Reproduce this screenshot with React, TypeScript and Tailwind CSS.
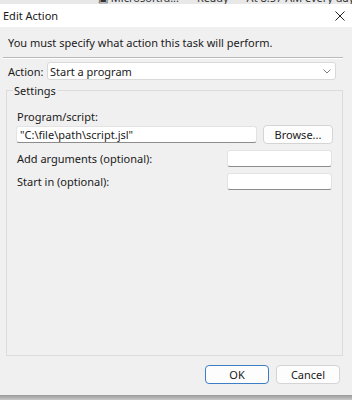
import React from "react";

const font = { fontFamily: '"Noto Sans", "Open Sans", sans-serif' };

const TextBox = ({ value, className }: { value?: string; className: string }) => (
  <div
    className={
      "bg-white border border-[#e3e3e3] border-b-[#8c8c8c] rounded-[3px] text-[11px] leading-[15px] px-[3px] text-[#1a1a1a] " +
      className
    }
  >
    {value}
  </div>
);

const Button = ({ label, isDefault }: { label: string; isDefault?: boolean }) => (
  <button
    className={
      "h-[19px] w-[64px] rounded-[4px] bg-[#fdfdfd] text-[11px] leading-[15px] text-[#1a1a1a] " +
      (isDefault ? "border border-[#3c7fc4]" : "border border-[#d4d4d4]")
    }
  >
    {label}
  </button>
);

export default function App() {
  return (
    <div className="w-[352px] h-[400px] flex flex-col bg-[#f0f0f0] overflow-hidden text-[#1a1a1a]" style={font}>
      {/* sliver of the window behind */}
      <div className="h-[4px] overflow-hidden bg-[#e8e8e8] text-[11px] leading-[15px] text-[#333] whitespace-nowrap">
        <div className="-mt-[10px] flex gap-[18px] pl-[98px]">
          <span>▣ Microsoftfd...</span>
          <span>Ready</span>
          <span>At 8:57 AM every day - After triggered</span>
        </div>
      </div>

      {/* title bar */}
      <div className="h-[23px] bg-white flex items-center justify-between pl-[3px] pr-[7px]">
        <span className="text-[11px] leading-[15px]">Edit Action</span>
        <svg width="10" height="10" viewBox="0 0 10 10" className="text-[#222]">
          <path d="M0.5 0.5L9.5 9.5M9.5 0.5L0.5 9.5" stroke="currentColor" strokeWidth="1" />
        </svg>
      </div>

      {/* body */}
      <div className="flex-1 flex flex-col px-[6px]">
        <div className="pt-[8px] pl-[2px] text-[11px] leading-[16px]">
          You must specify what action this task will perform.
        </div>
        <div className="mt-[6px] h-[2px] border-t border-[#b9b9b9] border-b border-b-white mr-[3px] -ml-[3px]" />

        <div className="mt-[3px] flex items-center">
          <span className="w-[41px] pl-[2px] text-[11px] leading-[15px]">Action:</span>
          <div className="w-[289px] h-[18px] bg-white border border-[#d9d9d9] rounded-[3px] flex items-center justify-between pl-[2px] pr-[4px]">
            <span className="text-[11px] leading-[15px]">Start a program</span>
            <svg width="8" height="5" viewBox="0 0 8 5">
              <path d="M0.5 0.5L4 4L7.5 0.5" stroke="#7a7a7a" fill="none" strokeWidth="1" />
            </svg>
          </div>
        </div>

        <fieldset className="mt-[3px] h-[273px] border border-[#dcdcdc] mr-[3px] pl-[9px] pr-[9px]">
          <legend className="ml-[-3px] px-[1px] text-[11px] leading-[15px]">Settings</legend>
          <div className="mt-[11px] text-[11px] leading-[15px] pl-[1px]">Program/script:</div>
          <div className="mt-[1px] flex items-center gap-[6px]">
            <TextBox value={'"C:\\file\\path\\script.jsl"'} className="w-[241px] h-[17px]" />
            <button className="w-[70px] h-[19px] rounded-[4px] bg-[#fdfdfd] border border-[#d4d4d4] text-[11px] leading-[15px]">
              Browse...
            </button>
          </div>
          <div className="mt-[6px] flex items-center justify-between">
            <span className="text-[11px] leading-[15px] pl-[1px]">Add arguments (optional):</span>
            <TextBox className="w-[105px] h-[17px] mr-[1px]" />
          </div>
          <div className="mt-[6px] flex items-center justify-between">
            <span className="text-[11px] leading-[15px] pl-[1px]">Start in (optional):</span>
            <TextBox className="w-[105px] h-[17px] mr-[1px]" />
          </div>
        </fieldset>

        <div className="mt-[9px] flex justify-end gap-[7px] pr-[6px]">
          <Button label="OK" isDefault />
          <Button label="Cancel" />
        </div>
      </div>

      {/* window bottom shadow */}
      <div className="h-[5px] bg-gradient-to-b from-[#9a9a9a] to-[#c8c8c8]" />
    </div>
  );
}
